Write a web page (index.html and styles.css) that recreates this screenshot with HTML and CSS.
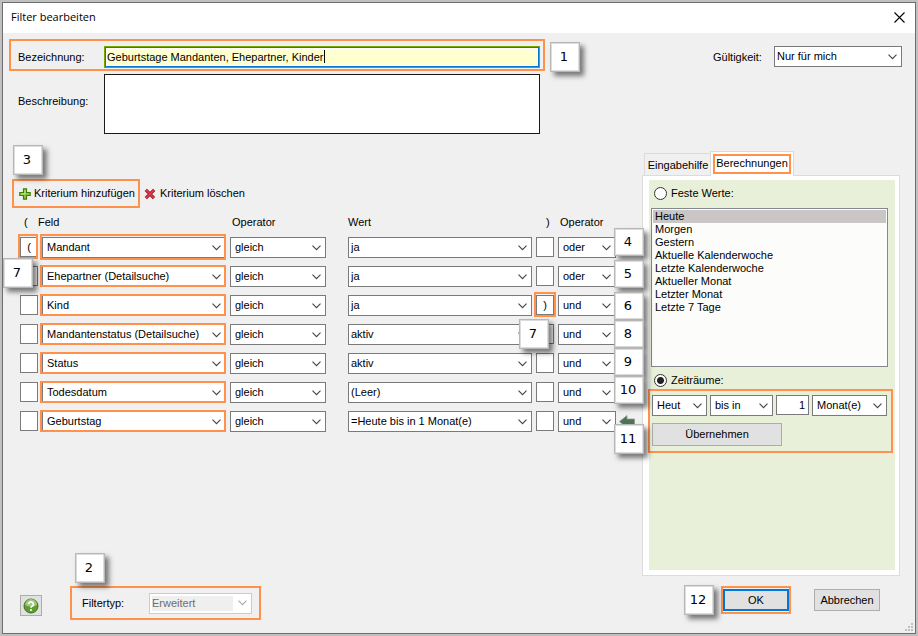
FILE: index.html
```html
<!DOCTYPE html>
<html lang="de">
<head>
    <meta charset="UTF-8">
    <meta name="viewport" content="width=device-width, initial-scale=1.0">
    <title>Filter bearbeiten</title>
    <link rel="stylesheet" href="styles.css">
</head>
<body>
    <div class="dialog">
        <div class="titlebar">
            <h1>Filter bearbeiten</h1>
            <button type="button" class="close" aria-label="Schließen">
                <svg width="11" height="11" viewBox="0 0 11 11"><path d="M0.5 0.5 L10.5 10.5 M10.5 0.5 L0.5 10.5" stroke="#000" stroke-width="1.1" fill="none"/></svg>
            </button>
        </div>

        <!-- Name and description -->
        <div class="header">
            <div class="header-fields">
                <div class="name-row marked">
                    <label for="name">Bezeichnung:</label>
                    <div class="name-box">
                        <input type="text" id="name" value="Geburtstage Mandanten, Ehepartner, Kinder">
                        <span class="caret"></span>
                    </div>
                    <span class="badge badge-1">1</span>
                </div>
                <div class="desc-row">
                    <label for="desc">Beschreibung:</label>
                    <textarea id="desc"></textarea>
                </div>
            </div>
            <div class="validity">
                <label for="validity">Gültigkeit:</label>
                <select id="validity" class="raised"><option>Nur für mich</option></select>
            </div>
        </div>

        <div class="main">
            <!-- Criteria -->
            <div class="criteria">
                <div class="toolbar">
                    <span class="badge badge-3">3</span>
                    <button type="button" class="tool marked">
                        <svg width="12" height="12" viewBox="0 0 12 12"><path d="M4.5 0.8 h3 v3.7 h3.7 v3 h-3.7 v3.7 h-3 v-3.7 h-3.7 v-3 h3.7 z" fill="#8cc63a" stroke="#3f7d0c" stroke-width="1.2"/><path d="M6 2 v4 h-4" stroke="#c9e88e" fill="none"/></svg>
                        Kriterium hinzufügen
                    </button>
                    <button type="button" class="tool">
                        <svg width="12" height="12" viewBox="0 0 12 12"><path d="M1.8 1.8 L10 10.2 M10.2 1.8 L1.8 10.2" stroke="#a5121f" stroke-width="3.2" fill="none"/><path d="M2 2 L10 10 M10 2 L2 10" stroke="#dc4652" stroke-width="1.4" fill="none"/></svg>
                        Kriterium löschen
                    </button>
                </div>

                <table class="grid">
                    <thead>
                        <tr>
                            <th class="col-open">(</th>
                            <th class="col-field"><span>Feld</span></th>
                            <th class="col-op">Operator</th>
                            <th class="col-value">Wert</th>
                            <th class="col-close">)</th>
                            <th class="col-join">Operator</th>
                        </tr>
                    </thead>
                    <tbody>
                        <tr>
                            <td><span class="frame tall"><input type="text" class="paren" aria-label="Klammer auf" value="("></span><span class="badge badge-7a">7</span></td>
                            <td><span class="frame tall"><select class="field" aria-label="Feld"><option>Mandant</option></select></span></td>
                            <td><select class="op" aria-label="Operator"><option>gleich</option></select></td>
                            <td><select class="value" aria-label="Wert"><option>ja</option></select></td>
                            <td><input type="text" class="paren" aria-label="Klammer zu"></td>
                            <td><select class="join" aria-label="Verknüpfung"><option>oder</option></select></td>
                        </tr>
                        <tr>
                            <td><input type="text" class="paren" aria-label="Klammer auf"></td>
                            <td><span class="frame"><select class="field" aria-label="Feld"><option>Ehepartner (Detailsuche)</option></select></span></td>
                            <td><select class="op" aria-label="Operator"><option>gleich</option></select></td>
                            <td><select class="value" aria-label="Wert"><option>ja</option></select></td>
                            <td><input type="text" class="paren" aria-label="Klammer zu"></td>
                            <td><select class="join" aria-label="Verknüpfung"><option>oder</option></select></td>
                        </tr>
                        <tr>
                            <td><input type="text" class="paren" aria-label="Klammer auf"></td>
                            <td><span class="frame"><select class="field" aria-label="Feld"><option>Kind</option></select></span></td>
                            <td><select class="op" aria-label="Operator"><option>gleich</option></select></td>
                            <td><select class="value" aria-label="Wert"><option>ja</option></select></td>
                            <td><span class="frame tall closed"><input type="text" class="paren" aria-label="Klammer zu" value=")"></span><span class="badge badge-7b">7</span></td>
                            <td><select class="join" aria-label="Verknüpfung"><option>und</option></select></td>
                        </tr>
                        <tr>
                            <td><input type="text" class="paren" aria-label="Klammer auf"></td>
                            <td><span class="frame"><select class="field" aria-label="Feld"><option>Mandantenstatus (Detailsuche)</option></select></span></td>
                            <td><select class="op" aria-label="Operator"><option>gleich</option></select></td>
                            <td><select class="value" aria-label="Wert"><option>aktiv</option></select></td>
                            <td><input type="text" class="paren" aria-label="Klammer zu"></td>
                            <td><select class="join" aria-label="Verknüpfung"><option>und</option></select></td>
                        </tr>
                        <tr>
                            <td><input type="text" class="paren" aria-label="Klammer auf"></td>
                            <td><span class="frame"><select class="field" aria-label="Feld"><option>Status</option></select></span></td>
                            <td><select class="op" aria-label="Operator"><option>gleich</option></select></td>
                            <td><select class="value" aria-label="Wert"><option>aktiv</option></select></td>
                            <td><input type="text" class="paren" aria-label="Klammer zu"></td>
                            <td><select class="join" aria-label="Verknüpfung"><option>und</option></select></td>
                        </tr>
                        <tr>
                            <td><input type="text" class="paren" aria-label="Klammer auf"></td>
                            <td><span class="frame"><select class="field" aria-label="Feld"><option>Todesdatum</option></select></span></td>
                            <td><select class="op" aria-label="Operator"><option>gleich</option></select></td>
                            <td><select class="value" aria-label="Wert"><option>(Leer)</option></select></td>
                            <td><input type="text" class="paren" aria-label="Klammer zu"></td>
                            <td><select class="join" aria-label="Verknüpfung"><option>und</option></select></td>
                        </tr>
                        <tr>
                            <td><input type="text" class="paren" aria-label="Klammer auf"></td>
                            <td><span class="frame"><select class="field" aria-label="Feld"><option>Geburtstag</option></select></span></td>
                            <td><select class="op" aria-label="Operator"><option>gleich</option></select></td>
                            <td><select class="value" aria-label="Wert"><option>=Heute bis in 1 Monat(e)</option></select></td>
                            <td><input type="text" class="paren" aria-label="Klammer zu"></td>
                            <td>
                                <div class="join-cell">
                                    <select class="join" aria-label="Verknüpfung"><option>und</option></select>
                                    <svg width="16" height="14" viewBox="0 0 16 14"><path d="M0.5 6.5 L8 0.5 V4 H15.5 V9.5 H8 V13 Z" fill="#4f7358" stroke="#8aa08c" stroke-width="0.8"/></svg>
                                </div>
                            </td>
                        </tr>
                    </tbody>
                </table>

                <div class="steps">
                    <span class="badge">4</span>
                    <span class="badge">5</span>
                    <span class="badge">6</span>
                    <span class="badge">8</span>
                    <span class="badge">9</span>
                    <span class="badge">10</span>
                    <span class="badge">11</span>
                </div>
            </div>

            <!-- Calculations -->
            <div class="side">
                <div class="tabs">
                    <button type="button" class="tab">Eingabehilfe</button>
                    <button type="button" class="tab active"><span class="marked">Berechnungen</span></button>
                </div>
                <div class="panel">
                    <div class="panel-body">
                        <label class="radio"><input type="radio" name="mode">Feste Werte:</label>
                        <select class="listbox" size="12" aria-label="Feste Werte">
                            <option selected>Heute</option>
                            <option>Morgen</option>
                            <option>Gestern</option>
                            <option>Aktuelle Kalenderwoche</option>
                            <option>Letzte Kalenderwoche</option>
                            <option>Aktueller Monat</option>
                            <option>Letzter Monat</option>
                            <option>Letzte 7 Tage</option>
                        </select>
                        <label class="radio"><input type="radio" name="mode" checked>Zeiträume:</label>
                        <div class="period marked">
                            <div class="period-row">
                                <select class="from raised" aria-label="Von"><option>Heut</option></select>
                                <select class="until" aria-label="Bis"><option>bis in</option></select>
                                <input type="text" class="count" aria-label="Anzahl" value="1">
                                <select class="unit" aria-label="Einheit"><option>Monat(e)</option></select>
                            </div>
                            <button type="button" class="btn apply">Übernehmen</button>
                        </div>
                    </div>
                </div>
            </div>
        </div>

        <div class="footer">
            <button type="button" class="btn help" aria-label="Hilfe">
                <svg width="16" height="16" viewBox="0 0 16 16"><circle cx="8" cy="8" r="7" fill="#5d9e2f" stroke="#3f6f24"/><path d="M2 7 a6 6 0 0 1 12 0 q-6 3 -12 0" fill="#9cc878"/><path d="M5.6 6.2 a2.4 2.2 0 1 1 3.6 1.9 q-1.2 0.6 -1.2 1.7" stroke="#fff" stroke-width="1.7" fill="none"/><circle cx="8" cy="12" r="1.1" fill="#fff"/></svg>
            </button>
            <div class="filter-type marked">
                <span class="badge badge-2">2</span>
                <label for="type">Filtertyp:</label>
                <select id="type" class="raised" disabled><option>Erweitert</option></select>
            </div>
            <div class="actions">
                <span class="badge badge-12">12</span>
                <span class="ok-mark marked"><button type="button" class="btn ok">OK</button></span>
                <button type="button" class="btn cancel">Abbrechen</button>
            </div>
        </div>

        <svg class="grip" width="9" height="8" viewBox="0 0 9 8"><path d="M7 0h2v2h-2z M7 3h2v2h-2z M4 3h2v2h-2z M7 6h2v2h-2z M4 6h2v2h-2z M1 6h2v2h-2z" fill="#bfbfbf"/></svg>
    </div>
</body>
</html>
```
FILE: styles.css
```css
* {
    box-sizing: border-box;
}

body {
    margin: 0;
    padding: 2px;
    background-color: #c0c0c0;
    font-family: "Liberation Sans", Arial, sans-serif;
    font-size: 11px;
    line-height: 13px;
    color: #000;
}

input, select, textarea, button {
    font: inherit;
    color: inherit;
    margin: 0;
    border-radius: 0;
    outline: none;
}

svg {
    flex-shrink: 0;
}

.dialog {
    position: relative;
    display: flex;
    flex-direction: column;
    min-height: calc(100vh - 4px);
    border: 1px solid #6e6e6e;
    background-color: #f0f0f0;
}

.titlebar {
    display: flex;
    align-items: center;
    justify-content: space-between;
    height: 30px;
    padding: 0 10px 2px 8px;
    background-color: #fff;
}

.titlebar h1 {
    margin: 0;
    font: 11px/16px "Open Sans", "Noto Sans", sans-serif;
}

.close {
    display: flex;
    padding: 0;
    border: 0;
    background: none;
}

/* Orange frame round the parts the steps refer to */
.marked {
    border: 2px solid #ff914d;
}

/* Numbered step markers */
.badge {
    display: flex;
    align-items: center;
    justify-content: center;
    width: 30px;
    height: 30px;
    padding-right: 2px;
    border: 1px solid #b8b8b8;
    background-color: #fff;
    box-shadow: inset 0 0 0 1px #dcdcdc, 4px 4px 5px rgba(0, 0, 0, 0.5);
    font: 13px/16px "DejaVu Sans", Verdana, sans-serif;
    position: absolute;
    z-index: 2;
}

/* Form controls */
select {
    height: 21px;
    padding: 0 18px 0 4px;
    border: 1px solid #7a7a7a;
    appearance: none;
    background: #fff url("data:image/svg+xml,%3Csvg xmlns='http://www.w3.org/2000/svg' width='9' height='6'%3E%3Cpath d='M0.5 0.7L4.5 4.7L8.5 0.7' fill='none' stroke='%23444' stroke-width='1.1'/%3E%3C/svg%3E") no-repeat right 4px center;
}

select.raised {
    padding-left: 2px;
}

.btn {
    border: 1px solid #adadad;
    background-color: #e1e1e1;
    padding: 0;
}

/* Header */
.header {
    display: flex;
    justify-content: space-between;
    padding: 6px 13px 0 6px;
}

.header-fields {
    width: 536px;
}

.header label {
    width: 86px;
}

.name-row {
    position: relative;
    display: flex;
    align-items: center;
    height: 32px;
    padding: 4px 3px 0 7px;
}

.name-box {
    position: relative;
    flex: 1;
}

#name {
    display: block;
    width: 100%;
    height: 22px;
    padding: 0 2px;
    border: 1px solid #76a800;
    background-color: #ffffcf;
    box-shadow: inset 0 0 0 1px #0078d7, inset 0 0 0 2px #fff;
}

.caret {
    position: absolute;
    left: 220px;
    top: 4px;
    width: 1px;
    height: 13px;
    background-color: #000;
}

.badge-1 {
    left: 539px;
    top: 1px;
}

.desc-row {
    display: flex;
    margin-top: 3px;
    padding: 0 5px 0 9px;
}

.desc-row label {
    padding-top: 21px;
}

.desc-row textarea {
    flex: 1;
    height: 60px;
    border: 1px solid #1a1a1a;
    background-color: #fff;
    resize: none;
}

.validity {
    display: flex;
    align-items: flex-start;
    padding-top: 7px;
}

.validity label {
    width: 61px;
    line-height: 23px;
}

#validity {
    width: 128px;
}

/* Main area */
.main {
    display: flex;
    flex: 1;
    justify-content: space-between;
    padding: 17px 15px 0 9px;
}

.criteria {
    position: relative;
    padding-top: 28px;
}

.toolbar {
    position: relative;
    display: flex;
    height: 29px;
}

.tool {
    display: flex;
    align-items: center;
    gap: 4px;
    padding: 0 4px;
    background: none;
}

.tool.marked {
    width: 128px;
    gap: 3px;
    padding: 0 5px;
    white-space: nowrap;
}

.tool:not(.marked) {
    border: 0;
}

.badge-3 {
    left: 1px;
    bottom: 33px;
}

.grid {
    margin-left: 8px;
    border-collapse: collapse;
    table-layout: fixed;
    width: 622px;
}

.grid tr {
    height: 29px;
}

.grid th {
    padding: 0;
    font-weight: normal;
    text-align: left;
}

.grid td {
    position: relative;
    padding: 0;
    vertical-align: top;
}

.grid select, .grid input {
    display: block;
}

.grid .col-open { width: 22px; padding-left: 4px; }
.grid .col-field { width: 188px; }
.grid .col-op { width: 118px; padding-left: 2px; }
.grid .col-value { width: 188px; }
.grid .col-close { width: 22px; padding-left: 10px; }
.grid .col-join { width: 84px; padding-left: 2px; }

.col-field span {
    margin-left: -4px;
}

.paren {
    width: 18px;
    height: 20px;
    padding: 0;
    border: 1px solid #7a7a7a;
    background-color: #fff;
    text-align: center;
}

.field { width: 184px; }
.op { width: 96px; }
.grid .value { width: 184px; padding-left: 2px; }
.join { width: 58px; }

.join-cell {
    display: flex;
    align-items: center;
    gap: 3px;
    height: 21px;
}

.frame {
    position: relative;
    display: inline-block;
    vertical-align: top;
}

.frame::after {
    content: "";
    position: absolute;
    inset: -1px 0 0 -2px;
    border: 2px solid #ff914d;
    pointer-events: none;
}

.frame.tall::after {
    inset: -3px 0 -2px -2px;
}

.frame.tall.closed::after {
    right: -2px;
}

.badge-7a {
    left: -17px;
    top: 21px;
}

.badge-7b {
    left: -17px;
    top: 24px;
}

.steps {
    position: absolute;
    left: 602px;
    top: 77px;
    z-index: 2;
    display: flex;
    flex-direction: column;
}

.steps .badge {
    position: static;
    height: 28px;
}

.steps .badge:nth-child(2),
.steps .badge:nth-child(3) {
    margin-top: 4px;
}

.steps .badge:last-child {
    height: 30px;
    margin-top: 20px;
}

/* Right side */
.side {
    display: flex;
    flex-direction: column;
    width: 258px;
}

.tabs {
    display: flex;
    align-items: flex-end;
    padding-left: 2px;
    height: 24px;
}

.tab {
    height: 22px;
    width: 66px;
    padding: 1px 0 0 1px;
    border: 1px solid #dcdcdc;
    border-width: 1px 0 0 1px;
    background-color: #f0f0f0;
    white-space: nowrap;
}

.tab.active {
    position: relative;
    z-index: 1;
    width: 84px;
    height: 25px;
    margin-bottom: -1px;
    padding: 0;
    border-width: 1px 1px 0 1px;
    background-color: #fff;
}

.tab .marked {
    display: block;
    width: 78px;
    margin-left: 2px;
    height: 20px;
    line-height: 15px;
}

.panel {
    flex: 1;
    padding: 4px 4px 5px 6px;
    border: 1px solid #dcdcdc;
    background-color: #fff;
}

.panel-body {
    height: 100%;
    padding: 6px 2px 0 0;
    background-color: #e8f0da;
}

.radio {
    display: flex;
    align-items: center;
    gap: 4px;
    height: 15px;
    padding-left: 5px;
}

.radio input {
    appearance: none;
    width: 13px;
    height: 13px;
    border: 1px solid #333;
    border-radius: 50%;
    background-color: #fff;
}

.radio input:checked {
    background-image: radial-gradient(circle, #222 0 3px, transparent 4px);
}

.listbox {
    display: block;
    width: calc(100% - 7px);
    height: 159px;
    margin: 7px 0 6px 2px;
    padding: 1px;
    border: 1px solid #828790;
    background: #fcfcfa;
    overflow: hidden;
}

.listbox option {
    min-height: 13px;
    padding: 0 2px;
    line-height: 13px;
}

.listbox option:checked {
    background: #c9c6c5 linear-gradient(#c9c6c5, #c9c6c5);
    color: #000;
}

.period {
    height: 64px;
    margin: 1px 0 0 -1px;
    padding: 4px 2px 0;
}

.period-row {
    display: flex;
    gap: 3px;
    margin-bottom: 7px;
}

.period-row .from {
    width: 55px;
    padding-left: 4px;
}

.period-row .until { width: 63px; }
.period-row .unit { width: 75px; }

.count {
    width: 33px;
    height: 20px;
    padding: 0 3px;
    border: 1px solid #7a7a7a;
    text-align: right;
}

.apply {
    width: 130px;
    height: 23px;
}

/* Footer */
.footer {
    display: flex;
    margin-top: 10px;
    padding: 0 35px 13px 17px;
}

.help {
    display: flex;
    align-items: center;
    justify-content: center;
    width: 22px;
    height: 21px;
    margin-top: 9px;
}

.filter-type {
    position: relative;
    display: flex;
    align-items: center;
    width: 191px;
    height: 34px;
    margin-left: 28px;
    padding: 0 7px 0 10px;
}

.filter-type label {
    flex: 1;
}

#type {
    width: 103px;
    border-color: #ccc;
    background-color: #fff;
    color: #6d6d6d;
    opacity: 1;
    box-shadow: inset 0 0 0 2px #fff, inset 83px 0 0 #efefef;
    background-image: url("data:image/svg+xml,%3Csvg xmlns='http://www.w3.org/2000/svg' width='9' height='6'%3E%3Cpath d='M0.5 0.7L4.5 4.7L8.5 0.7' fill='none' stroke='%23aaa' stroke-width='1.1'/%3E%3C/svg%3E");
}

.badge-2 {
    left: 3px;
    bottom: 35px;
}

.actions {
    position: relative;
    display: flex;
    align-items: flex-start;
    margin-left: auto;
}

.badge-12 {
    right: 166px;
    top: -1px;
}

.ok-mark {
    width: 70px;
    height: 28px;
    padding-top: 1px;
    margin-right: 23px;
}

.ok {
    display: block;
    width: 66px;
    height: 22px;
    border: 2px solid #0078d7;
}

.cancel {
    width: 66px;
    height: 22px;
    margin-top: 3px;
}

.grip {
    position: absolute;
    right: 2px;
    bottom: 2px;
}
```
